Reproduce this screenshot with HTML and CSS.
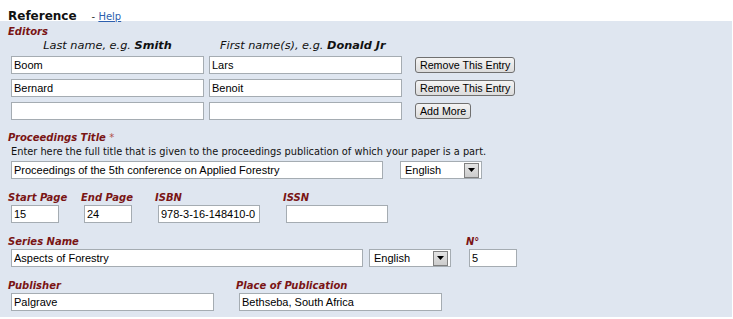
FILE: index.html
```html
<!DOCTYPE html>
<html>
<head>
<meta charset="utf-8">
<link rel="stylesheet" href="styles.css">
</head>
<body>
<div class="top"><span class="title">Reference</span><span class="help">- <a class="help-link" href="#">Help</a></span></div>
<div class="panel">
  <div class="lbl">Editors</div>
  <div class="colheads">
    <div class="colhead ch-last">Last name, e.g. <b>Smith</b></div>
    <div class="colhead ch-first">First name(s), e.g. <b>Donald Jr</b></div>
  </div>
  <div class="editor-grid">
    <input class="inp" type="text" value="Boom">
    <input class="inp" type="text" value="Lars">
    <button class="btn" type="button">Remove This Entry</button>
    <input class="inp" type="text" value="Bernard">
    <input class="inp" type="text" value="Benoit">
    <button class="btn" type="button">Remove This Entry</button>
    <input class="inp" type="text" value="">
    <input class="inp" type="text" value="">
    <button class="btn" type="button">Add More</button>
  </div>

  <div class="lbl sec-title">Proceedings Title <span class="req">*</span></div>
  <div class="hint">Enter here the full title that is given to the proceedings publication of which your paper is a part.</div>
  <div class="title-row">
    <input class="inp w-title" type="text" value="Proceedings of the 5th conference on Applied Forestry">
    <div class="select sel-title"><span class="sel-val">English</span><span class="sel-arrow"><svg class="tri" width="7" height="4" viewBox="0 0 7 4"><path d="M0 0H7L3.5 4Z" fill="#000"/></svg></span></div>
  </div>

  <div class="row">
    <div class="field f-start"><div class="lbl">Start Page</div><input class="inp w-page" type="text" value="15"></div>
    <div class="field f-end"><div class="lbl">End Page</div><input class="inp w-page" type="text" value="24"></div>
    <div class="field f-isbn"><div class="lbl">ISBN</div><input class="inp w-isbn" type="text" value="978-3-16-148410-0"></div>
    <div class="field"><div class="lbl">ISSN</div><input class="inp w-isbn" type="text" value=""></div>
  </div>

  <div class="row">
    <div class="field"><div class="lbl">Series Name</div><input class="inp w-series" type="text" value="Aspects of Forestry"></div>
    <div class="select sel-series"><span class="sel-val">English</span><span class="sel-arrow"><svg class="tri" width="7" height="4" viewBox="0 0 7 4"><path d="M0 0H7L3.5 4Z" fill="#000"/></svg></span></div>
    <div class="field f-no"><div class="lbl">N°</div><input class="inp w-page" type="text" value="5"></div>
  </div>

  <div class="row">
    <div class="field f-pub"><div class="lbl">Publisher</div><input class="inp w-pub" type="text" value="Palgrave"></div>
    <div class="field"><div class="lbl">Place of Publication</div><input class="inp w-pub" type="text" value="Bethseba, South Africa"></div>
  </div>
</div>
</body>
</html>
```

FILE: styles.css
```css
html, body {
  margin: 0;
  padding: 0;
  background: #ffffff;
}
body {
  font-family: "DejaVu Sans", Verdana, sans-serif;
  color: #000;
}
.top {
  height: 21px;
  box-sizing: border-box;
  padding: 8px 0 0 8px;
  line-height: 13px;
  white-space: nowrap;
}
.title {
  font-size: 12px;
  font-weight: bold;
  color: #111;
}
.help {
  font-size: 10px;
  margin-left: 15px;
  color: #333;
}
.help-link {
  color: #2d5fae;
  text-decoration: underline;
}
.panel {
  width: 732px;
  background: #dfe6f0;
  box-sizing: border-box;
  padding: 4px 0 6px 8px;
}
.lbl {
  font-size: 10px;
  line-height: 13px;
  font-weight: bold;
  font-style: italic;
  color: #7a1515;
  white-space: nowrap;
}
.req {
  font-weight: normal;
  color: #b0504a;
}
.colheads {
  display: flex;
  margin-top: 1px;
  padding-left: 3px;
}
.colhead {
  font-size: 11.3px;
  line-height: 13px;
  font-style: italic;
  color: #111;
  white-space: nowrap;
}
.ch-last {
  width: 193px;
  text-align: center;
}
.ch-first {
  margin-left: 16px;
}
.editor-grid {
  display: grid;
  grid-template-columns: 193px 193px auto;
  column-gap: 5px;
  row-gap: 5px;
  align-items: center;
  justify-items: start;
  margin-top: 4px;
  padding-left: 3px;
}
.inp {
  width: 193px;
  height: 18px;
  box-sizing: border-box;
  border: 1px solid #a5acb2;
  background: #fff;
  padding: 0 0 0 2px;
  margin: 0;
  font-family: "Liberation Sans", Arial, sans-serif;
  font-size: 11px;
  color: #000;
  outline: none;
}
.btn {
  height: 16px;
  box-sizing: border-box;
  margin: 0 0 0 8px;
  padding: 0 4px;
  border: 1px solid #707070;
  border-radius: 3px;
  background: linear-gradient(#f4f4f4, #dcdcdc);
  font-family: "Liberation Sans", Arial, sans-serif;
  font-size: 8pt;
  line-height: 14px;
  color: #000;
  white-space: nowrap;
}
.sec-title {
  margin-top: 11px;
}
.hint {
  font-size: 9.8px;
  line-height: 13px;
  margin-top: 1px;
  padding-left: 3px;
  color: #111;
  white-space: nowrap;
}
.title-row {
  display: flex;
  align-items: center;
  margin-top: 3px;
  padding-left: 3px;
}
.w-title { width: 372px; }
.w-page { width: 48px; }
.w-isbn { width: 102px; }
.w-series { width: 352px; }
.w-pub { width: 203px; }

.select {
  width: 82px;
  height: 18px;
  box-sizing: border-box;
  border: 1px solid #a5acb2;
  background: #fff;
  display: flex;
  align-items: center;
  padding: 1px 2px 1px 0;
}
.sel-title { margin-left: 17px; }
.sel-series { margin-left: 6px; }
.sel-val {
  flex: 1;
  padding-left: 4px;
  font-family: "Liberation Sans", Arial, sans-serif;
  font-size: 11px;
  line-height: 14px;
  color: #000;
}
.sel-arrow {
  width: 15px;
  height: 15px;
  box-sizing: border-box;
  border: 1px solid #808080;
  background: linear-gradient(#e4e4e4, #cccccc);
  display: flex;
  align-items: center;
  justify-content: center;
}
.tri { display: block; }

.row {
  display: flex;
  align-items: flex-end;
  margin-top: 12px;
}
.field {
  display: flex;
  flex-direction: column;
  align-items: flex-start;
}
.field .inp {
  margin-top: 1px;
  margin-left: 3px;
}
.f-start { width: 73px; }
.f-end { width: 74px; }
.f-isbn { width: 128px; }
.f-no { margin-left: 15px; }
.f-pub { width: 228px; }
```
